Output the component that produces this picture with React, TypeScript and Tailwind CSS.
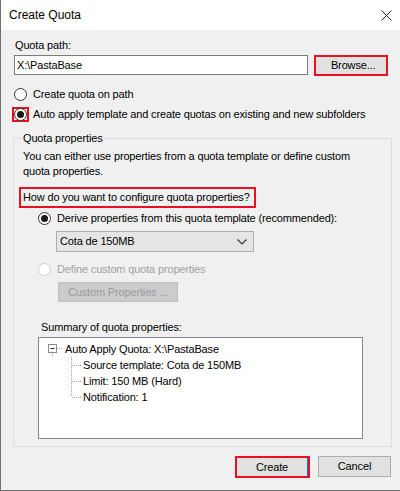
import React from "react";

function Radio({ checked, disabled }: { checked?: boolean; disabled?: boolean }) {
  return (
    <span
      className={`flex h-[13px] w-[13px] shrink-0 items-center justify-center rounded-full border bg-white ${
        disabled ? "border-[#cccccc] bg-[#f0f0f0]" : "border-[#333333]"
      }`}
    >
      {checked && <span className="h-[7px] w-[7px] rounded-full bg-[#1a1a1a]" />}
    </span>
  );
}

export default function App() {
  return (
    <div
      className="h-[491px] w-[400px] overflow-hidden whitespace-nowrap border-b border-l border-[#707070] bg-[#f0f0f0] text-[11px] leading-[15px] tracking-[-0.15px] text-black"
      style={{ fontFamily: '"Liberation Sans", Arial, sans-serif' }}
    >
      {/* title bar */}
      <div className="flex h-[30px] items-center justify-between bg-white pl-[8px] pr-[8px]">
        <span className="text-[12px] tracking-normal">Create Quota</span>
        <svg width="11" height="11" viewBox="0 0 11 11" className="mt-[1px]">
          <path d="M0.5 0.5 L10.5 10.5 M10.5 0.5 L0.5 10.5" stroke="#222" strokeWidth="1" />
        </svg>
      </div>

      <div className="px-[12px]">
        <div className="mt-[8px] pl-[2px]">Quota path:</div>
        <div className="mt-[2px] flex items-start pl-[1px]">
          <div className="flex h-[20px] w-[296px] items-center border border-[#7a7a7a] bg-white pl-[2px]">
            X:\PastaBase
          </div>
          <div className="ml-[6px] h-[21px] w-[74px] border-2 border-[#e81123]">
            <div className="flex h-full items-center justify-center bg-[#e1e1e1] pl-[4px]">Browse...</div>
          </div>
        </div>

        <div className="mt-[11px] flex items-center gap-[6px] pl-[1px]">
          <Radio />
          <span>Create quota on path</span>
        </div>
        <div className="mt-[5px] flex items-center">
          <span className="-ml-[1px] flex h-[15px] w-[17px] items-center justify-center border-2 border-[#e81123]">
            <Radio checked />
          </span>
          <span className="ml-[4px]">Auto apply template and create quotas on existing and new subfolders</span>
        </div>

        {/* group box */}
        <div className="mt-[16px] w-[379px] border border-[#dcdcdc] pb-[7px]">
          <div className="-mt-[8px] ml-[8px] w-fit bg-[#f0f0f0] px-[1px]">Quota properties</div>
          <div className="mt-[3px] pl-[9px]">
            You can either use properties from a quota template or define custom
            <br />
            quota properties.
          </div>
          <div className="ml-[5px] mt-[8px] flex h-[21px] w-[237px] items-center border-2 border-[#e81123] pl-[2px]">
            How do you want to configure quota properties?
          </div>

          <div className="ml-[24px] mt-[3px] flex items-center gap-[6px]">
            <Radio checked />
            <span>Derive properties from this quota template (recommended):</span>
          </div>
          <div className="ml-[42px] mt-[5px] flex h-[21px] w-[198px] items-center justify-between border border-[#adadad] bg-[#e5e5e5] pl-[3px] pr-[6px]">
            <span>Cota de 150MB</span>
            <svg width="10" height="6" viewBox="0 0 10 6">
              <path d="M0.5 0.5 L5 5 L9.5 0.5" fill="none" stroke="#333" strokeWidth="1.2" />
            </svg>
          </div>

          <div className="ml-[24px] mt-[10px] flex items-center gap-[6px] text-[#a0a0a0]">
            <Radio disabled />
            <span>Define custom quota properties</span>
          </div>
          <div className="ml-[44px] mt-[5px] flex h-[20px] w-[120px] items-center justify-center border border-[#bfbfbf] bg-[#cccccc] text-[#9a9a9a]">
            Custom Properties ...
          </div>

          <div className="ml-[27px] mt-[18px]">Summary of quota properties:</div>
          <div className="ml-[24px] mt-[2px] h-[102px] w-[325px] border border-[#828790] bg-white pt-[3px]">
            <div className="flex h-[16px] items-center">
              <svg width="26" height="16" viewBox="0 0 26 16" className="ml-[8px] shrink-0">
                <rect x="1.5" y="3.5" width="8" height="8" fill="white" stroke="#8c8c8c" />
                <path d="M3.5 7.5 H7.5" stroke="#333" />
                <path d="M10 7.5 H16" stroke="#a0a0a0" strokeDasharray="1 1" />
                <path d="M5.5 12 V16" stroke="#a0a0a0" strokeDasharray="1 1" />
              </svg>
              <span className="-ml-[8px]">Auto Apply Quota: X:\PastaBase</span>
            </div>
            {["Source template: Cota de 150MB", "Limit: 150 MB (Hard)", "Notification: 1"].map((t, i) => (
              <div key={t} className="flex h-[16px] items-center">
                <svg width="14" height="16" viewBox="0 0 14 16" className="ml-[32px] shrink-0">
                  <path d={i === 2 ? "M0.5 0 V8" : "M0.5 0 V16"} stroke="#a0a0a0" strokeDasharray="1 1" />
                  <path d="M1 8.5 H10" stroke="#a0a0a0" strokeDasharray="1 1" />
                </svg>
                <span className="-ml-[2px]">{t}</span>
              </div>
            ))}
          </div>
        </div>

        <div className="-mr-[3px] mt-[9px] flex items-start justify-end">
          <div className="h-[22px] w-[75px] border-2 border-[#e81123]">
            <div className="flex h-full items-center justify-center border-r border-[#0078d7] bg-[#e1e1e1]">Create</div>
          </div>
          <div className="ml-[8px] flex h-[21px] w-[73px] items-center justify-center border border-[#adadad] bg-[#e1e1e1]">
            Cancel
          </div>
        </div>
      </div>
    </div>
  );
}
